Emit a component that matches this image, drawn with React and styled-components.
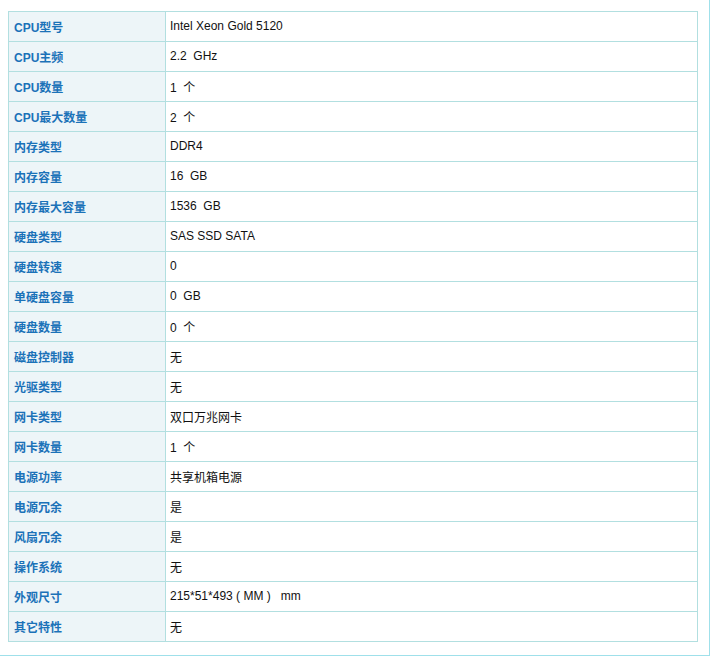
import React from 'react';
import styled, { createGlobalStyle } from 'styled-components';

const GlobalStyle = createGlobalStyle`
  body {
    margin: 0;
    background: #fff;
    font-family: "Liberation Sans", Arial, "Noto Sans CJK SC", sans-serif;
  }
`;

const Panel = styled.div`
  box-sizing: content-box;
  width: 701px;
  height: 644px;
  padding: 11px 0 0 8px;
  border-right: 1px solid #9fe0ea;
  border-bottom: 1px solid #9fe0ea;
`;

const SpecTable = styled.table`
  width: 690px;
  table-layout: fixed;
  border-collapse: collapse;
  font-size: 12px;
`;

const LabelCol = styled.col`
  width: 157px;
`;

const Row = styled.tr`
  height: 30px;
`;

const Label = styled.th`
  padding: 0 0 1px 5px;
  text-align: left;
  font-weight: bold;
  color: #1b72b8;
  background: #edf5f8;
  border: 1px solid #b2dfe0;
`;

const Value = styled.td`
  padding: 0 0 1px 4px;
  color: #111;
  border: 1px solid #b2dfe0;
  white-space: pre;
`;

const specs = [
  ['CPU型号', 'Intel Xeon Gold 5120'],
  ['CPU主频', '2.2  GHz'],
  ['CPU数量', '1  个'],
  ['CPU最大数量', '2  个'],
  ['内存类型', 'DDR4'],
  ['内存容量', '16  GB'],
  ['内存最大容量', '1536  GB'],
  ['硬盘类型', 'SAS SSD SATA'],
  ['硬盘转速', '0'],
  ['单硬盘容量', '0  GB'],
  ['硬盘数量', '0  个'],
  ['磁盘控制器', '无'],
  ['光驱类型', '无'],
  ['网卡类型', '双口万兆网卡'],
  ['网卡数量', '1  个'],
  ['电源功率', '共享机箱电源'],
  ['电源冗余', '是'],
  ['风扇冗余', '是'],
  ['操作系统', '无'],
  ['外观尺寸', '215*51*493 ( MM )   mm'],
  ['其它特性', '无'],
];

export default function App() {
  return (
    <>
      <GlobalStyle />
      <Panel>
        <SpecTable>
          <colgroup>
            <LabelCol />
            <col />
          </colgroup>
          <tbody>
            {specs.map(([k, v]) => (
              <Row key={k}>
                <Label>{k}</Label>
                <Value>{v}</Value>
              </Row>
            ))}
          </tbody>
        </SpecTable>
      </Panel>
    </>
  );
}
